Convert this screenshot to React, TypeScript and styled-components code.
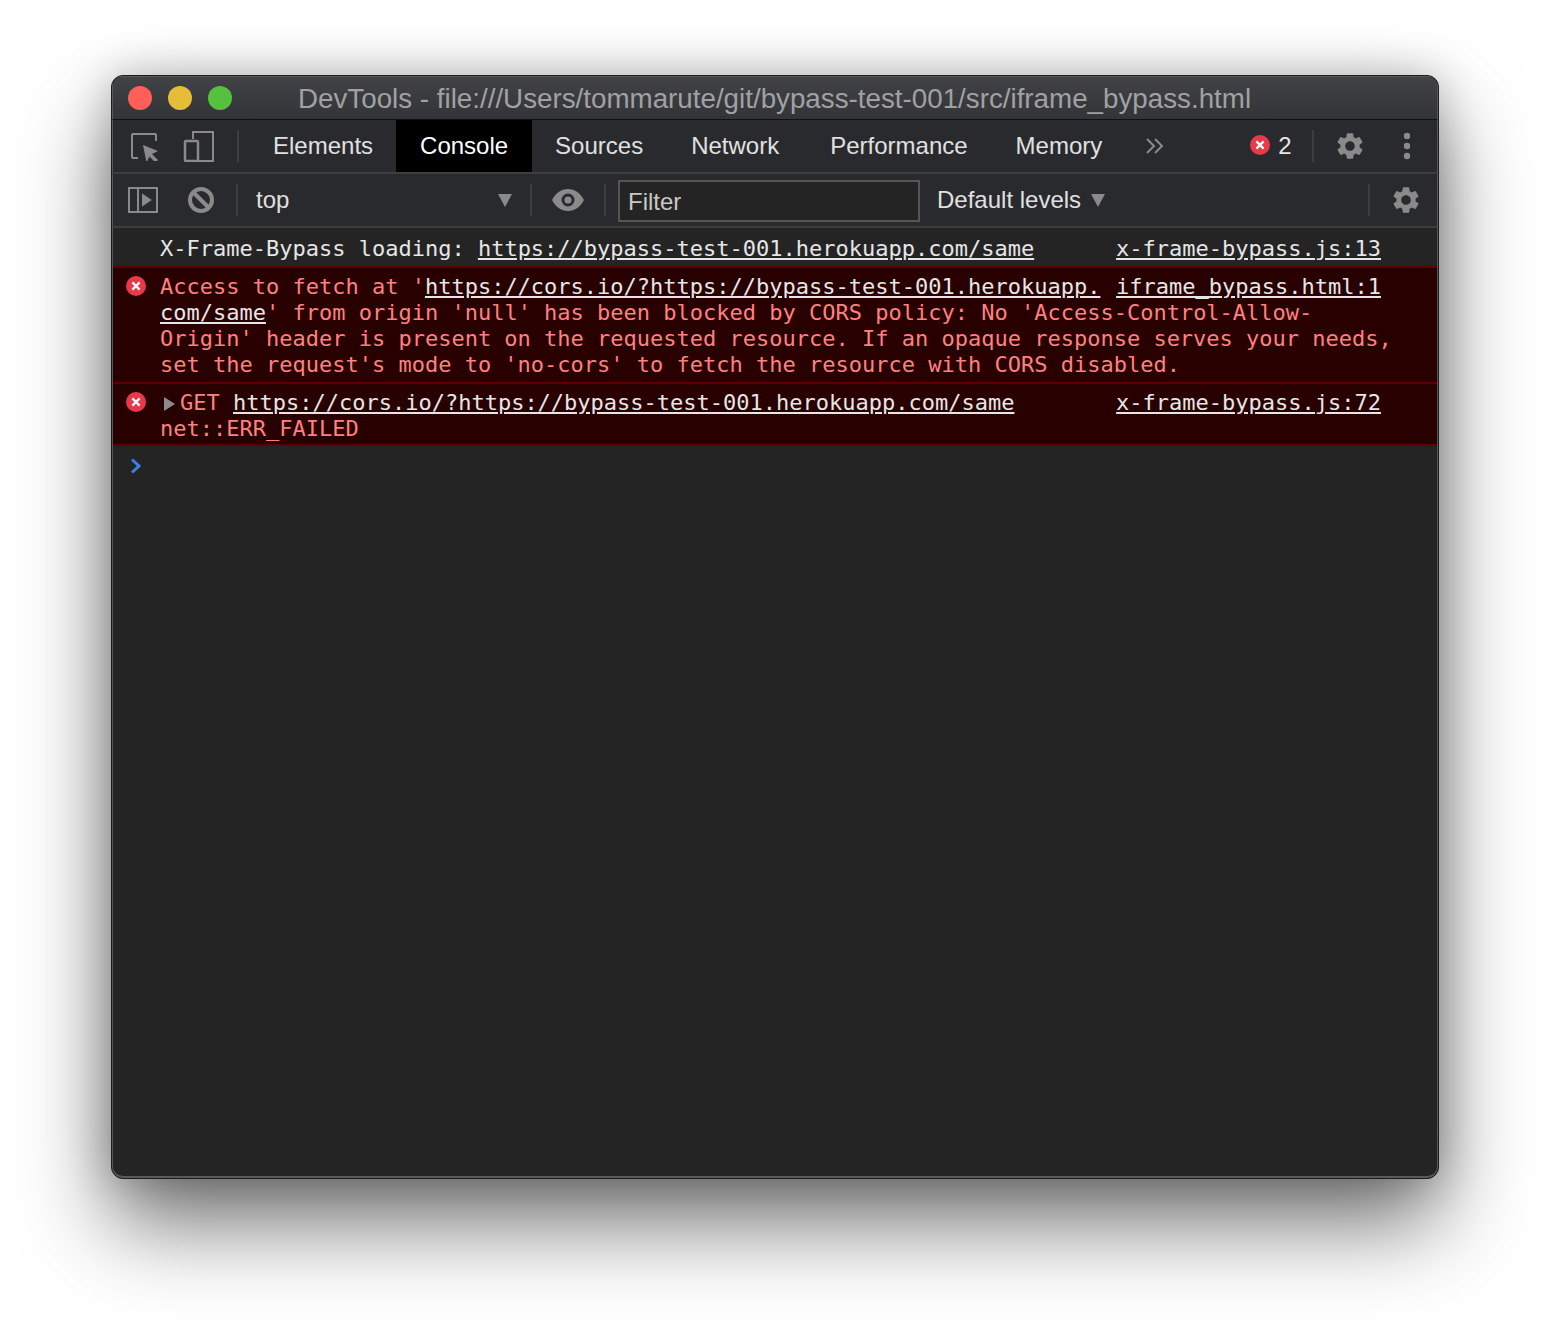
import React from "react";
import styled, { createGlobalStyle } from "styled-components";
import { MdSettings } from "react-icons/md";

const Global = createGlobalStyle`
  html, body { margin: 0; padding: 0; background: #fff; }
  body { width: 1550px; height: 1326px; overflow: hidden; }
`;

const Page = styled.div`
  width: 1550px;
  height: 1326px;
  padding: 75px 111px 0;
  box-sizing: border-box;
  font-family: "Liberation Sans", Arial, sans-serif;
`;

const Window = styled.div`
  width: 1328px;
  height: 1104px;
  box-sizing: border-box;
  border: 1px solid #1c1c1c;
  border-radius: 12px;
  box-shadow: 0 44px 88px 0 rgba(0, 0, 0, 0.56), 0 0 44px rgba(0, 0, 0, 0.22);
  background: #242424;
  display: flex;
  flex-direction: column;
  overflow: hidden;
`;

const TitleBar = styled.div`
  height: 44px;
  flex: none;
  display: flex;
  align-items: center;
  background: linear-gradient(#414246, #333438);
  border-bottom: 1px solid #111;
  border-top: 1px solid #57585b;
  border-left: 1px solid #57585b;
  border-right: 1px solid #57585b;
  box-sizing: border-box;
  padding-left: 15px;
  gap: 16px;
`;

const Light = styled.span<{ $c: string }>`
  width: 24px;
  height: 24px;
  border-radius: 50%;
  background: ${(p) => p.$c};
  flex: none;
`;

const Title = styled.div`
  margin-left: 50px;
  padding-top: 2px;
  color: #a0a1a3;
  font-size: 27.75px;
  line-height: 40px;
  white-space: nowrap;
`;

const Bar = styled.div`
  height: 52px;
  flex: none;
  display: flex;
  align-items: stretch;
  background: #292a2d;
  border-bottom: 2px solid #3c3d40;
  border-left: 1px solid #57585b;
  border-right: 1px solid #57585b;
`;

const IconSlot = styled.div<{ $w: number; $ml?: number }>`
  width: ${(p) => p.$w}px;
  margin-left: ${(p) => p.$ml ?? 0}px;
  flex: none;
  display: flex;
  align-items: center;
  justify-content: center;
  color: #8a8a8a;
`;

const Sep = styled.div<{ $ml: number }>`
  width: 2px;
  height: 32px;
  align-self: center;
  background: #3c3d40;
  margin-left: ${(p) => p.$ml}px;
  flex: none;
`;

const Tabs = styled.div`
  display: flex;
  margin-left: 10px;
`;

const Tab = styled.div<{ $active?: boolean; $mr?: number }>`
  padding: 0 24px;
  margin-right: ${(p) => p.$mr ?? 0}px;
  display: flex;
  align-items: center;
  font-size: 24px;
  color: ${(p) => (p.$active ? "#fff" : "#e0e0e0")};
  background: ${(p) => (p.$active ? "#000" : "transparent")};
`;

const ErrorCount = styled.div`
  display: flex;
  align-items: center;
  gap: 8px;
  margin-left: 85px;
  color: #e6e6e6;
  font-size: 24px;

  svg {
    margin-top: -2px;
  }
`;

const Spacer = styled.div`
  flex: 1;
`;

const TopLabel = styled.div`
  width: 256px;
  margin-left: 18px;
  display: flex;
  align-items: center;
  justify-content: space-between;
  font-size: 24px;
  color: #e0e0e0;
`;

const Filter = styled.div`
  width: 302px;
  height: 42px;
  align-self: center;
  margin: 2px 0 0 12px;
  box-sizing: border-box;
  border: 2px solid #555;
  background: #242424;
  color: #c8c8c8;
  font-size: 24px;
  padding-left: 8px;
  line-height: 40px;
`;

const Levels = styled.div`
  margin-left: 17px;
  display: flex;
  align-items: center;
  gap: 10px;
  font-size: 24px;
  color: #e0e0e0;
`;

const Console = styled.div`
  flex: 1;
  font-family: "DejaVu Sans Mono", monospace;
  font-size: 22px;
  line-height: 26px;
  color: #e6e6e6;
  border-left: 1px solid #57585b;
  border-right: 1px solid #57585b;
  border-bottom: 2px solid #5a5a5c;
  border-radius: 0 0 11px 11px;
`;

const Row = styled.div<{ $error?: boolean; $top: number; $bottom: number }>`
  position: relative;
  padding: ${(p) => p.$top}px 45px ${(p) => p.$bottom}px 47px;
  white-space: pre;
  background: ${(p) => (p.$error ? "#290000" : "transparent")};
  color: ${(p) => (p.$error ? "#ff8080" : "#e6e6e6")};
  border-bottom: 2px solid #5c0000;
`;

const Source = styled.a`
  float: right;
  margin-right: 11px;
  color: #e6e6e6;
  text-decoration: underline;
`;

const Link = styled.a`
  color: #e6e6e6;
  text-decoration: underline;
`;

const ErrorMark = styled.span`
  position: absolute;
  left: 13px;
  top: 8px;
  display: flex;
`;

const Arrow = styled.span`
  display: inline-block;
  box-sizing: border-box;
  width: 20px;
  padding-left: 4px;
  vertical-align: middle;
  line-height: 0;
`;

const Prompt = styled.div`
  padding: 12px 0 0 17px;
  line-height: 0;
`;

const ErrIcon = () => (
  <svg width="20" height="20" viewBox="0 0 20 20">
    <circle cx="10" cy="10" r="10" fill="#e8394a" />
    <path d="M6.4 6.4l7.2 7.2M13.6 6.4l-7.2 7.2" stroke="#fff" strokeWidth="2.2" />
  </svg>
);

export default function App() {
  return (
    <Page>
      <Global />
      <Window>
        <TitleBar>
          <Light $c="#ff5f57" />
          <Light $c="#e6bd38" />
          <Light $c="#56c13c" />
          <Title>DevTools - file:///Users/tommarute/git/bypass-test-001/src/iframe_bypass.html</Title>
        </TitleBar>
        <Bar>
          <IconSlot $w={30} $ml={17}>
            <svg width="30" height="30" viewBox="0 0 30 30" fill="none">
              <path d="M8 27H3a1 1 0 0 1-1-1V4a1 1 0 0 1 1-1h22a1 1 0 0 1 1 1v6" stroke="#8a8a8a" strokeWidth="2" />
              <path d="M13 14l15 6-6 3 6 6-2.500 2.500-6-6-3 6z" fill="#8a8a8a" />
            </svg>
          </IconSlot>
          <IconSlot $w={32} $ml={23}>
            <svg width="32" height="32" viewBox="0 0 32 32" fill="none">
              <path d="M10 9V2h20v29H15" stroke="#8a8a8a" strokeWidth="2" />
              <rect x="2" y="11" width="13" height="20" rx="1" stroke="#8a8a8a" strokeWidth="2.500" />
            </svg>
          </IconSlot>
          <Sep $ml={22} />
          <Tabs>
            <Tab $mr={-1}>Elements</Tab>
            <Tab $active $mr={-1}>Console</Tab>
            <Tab>Sources</Tab>
            <Tab $mr={3}>Network</Tab>
            <Tab>Performance</Tab>
            <Tab>Memory</Tab>
          </Tabs>
          <IconSlot $w={20} $ml={19}>
            <svg width="20" height="18" viewBox="0 0 20 18" fill="none">
              <path d="M2 2l7 7-7 7M10 2l7 7-7 7" stroke="#8a8a8a" strokeWidth="2" />
            </svg>
          </IconSlot>
          <ErrorCount>
            <ErrIcon />
            2
          </ErrorCount>
          <Sep $ml={20} />
          <IconSlot $w={32} $ml={20}>
            <MdSettings size={36} />
          </IconSlot>
          <IconSlot $w={12} $ml={35}>
            <svg width="8" height="28" viewBox="0 0 8 28" fill="#8a8a8a">
              <circle cx="4" cy="4" r="3.200" />
              <circle cx="4" cy="14" r="3.200" />
              <circle cx="4" cy="24" r="3.200" />
            </svg>
          </IconSlot>
        </Bar>
        <Bar>
          <IconSlot $w={30} $ml={15}>
            <svg width="30" height="26" viewBox="0 0 30 26" fill="none">
              <rect x="1" y="1" width="28" height="24" stroke="#8a8a8a" strokeWidth="2" />
              <path d="M10 1v24" stroke="#8a8a8a" strokeWidth="2" />
              <path d="M14 6.500l10 6.500-10 6.500z" fill="#8a8a8a" />
            </svg>
          </IconSlot>
          <IconSlot $w={28} $ml={29}>
            <svg width="26" height="26" viewBox="0 0 26 26" fill="none">
              <circle cx="13" cy="13" r="11" stroke="#8a8a8a" strokeWidth="4" />
              <path d="M5 5l16 16" stroke="#8a8a8a" strokeWidth="4" />
            </svg>
          </IconSlot>
          <Sep $ml={21} />
          <TopLabel>
            top
            <svg width="14" height="13" viewBox="0 0 14 13" fill="#8a8a8a">
              <path d="M0 0h14L7 13z" />
            </svg>
          </TopLabel>
          <Sep $ml={18} />
          <IconSlot $w={32} $ml={20}>
            <svg width="32" height="22" viewBox="0 0 32 22" fill="#8a8a8a">
              <path fillRule="evenodd" d="M16 0C9 0 3.500 4.400 0 11c3.500 6.600 9 11 16 11s12.500-4.400 16-11C28.500 4.400 23 0 16 0zm0 4.500a6.500 6.500 0 1 1 0 13 6.500 6.500 0 0 1 0-13z" />
              <circle cx="16" cy="11" r="3.600" />
            </svg>
          </IconSlot>
          <Sep $ml={20} />
          <Filter>Filter</Filter>
          <Levels>
            Default levels
            <svg width="14" height="13" viewBox="0 0 14 13" fill="#8a8a8a">
              <path d="M0 0h14L7 13z" />
            </svg>
          </Levels>
          <Spacer />
          <Sep $ml={0} />
          <IconSlot $w={32} $ml={20}>
            <MdSettings size={36} />
          </IconSlot>
          <IconSlot $w={0} $ml={15} />
        </Bar>
        <Console>
          <Row $top={8} $bottom={4}>
            <Source>x-frame-bypass.js:13</Source>
            X-Frame-Bypass loading: <Link>https://bypass-test-001.herokuapp.com/same</Link>
          </Row>
          <Row $error $top={6} $bottom={4}>
            <ErrorMark>
              <ErrIcon />
            </ErrorMark>
            <Source>iframe_bypass.html:1</Source>
            Access to fetch at '<Link>https://cors.io/?https://bypass-test-001.herokuapp.</Link>
            <br />
            <Link>com/same</Link>' from origin 'null' has been blocked by CORS policy: No 'Access-Control-Allow-
            <br />
            Origin' header is present on the requested resource. If an opaque response serves your needs,
            <br />
            set the request's mode to 'no-cors' to fetch the resource with CORS disabled.
          </Row>
          <Row $error $top={6} $bottom={2}>
            <ErrorMark>
              <ErrIcon />
            </ErrorMark>
            <Source>x-frame-bypass.js:72</Source>
            <Arrow>
              <svg width="11" height="14" viewBox="0 0 11 14" fill="#8a8a8a">
                <path d="M0 0l11 7-11 7z" />
              </svg>
            </Arrow>
            GET <Link>https://cors.io/?https://bypass-test-001.herokuapp.com/same</Link>
            <br />
            net::ERR_FAILED
          </Row>
          <Prompt>
            <svg width="12" height="16" viewBox="0 0 12 16" fill="none">
              <path d="M2 1.500l7 6.500-7 6.500" stroke="#3a80e8" strokeWidth="3" />
            </svg>
          </Prompt>
        </Console>
      </Window>
    </Page>
  );
}
